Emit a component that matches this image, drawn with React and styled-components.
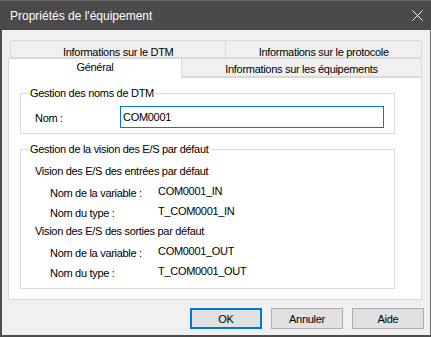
import React from 'react'
import styled, {createGlobalStyle} from 'styled-components'

const GlobalStyle = createGlobalStyle`
  html, body {
    margin: 0;
    padding: 0;
    background: #f0f0f0;
  }
  body {
    font-family: "Liberation Sans", Arial, sans-serif;
  }
`

const font = `
  font-family: "Liberation Sans", Arial, sans-serif;
  font-size: 11px;
  letter-spacing: -0.3px;
  color: #000;
`

const Window = styled.div`
  width: 431px;
  height: 337px;
  box-sizing: border-box;
  display: flex;
  flex-direction: column;
  background: #f0f0f0;
  border-left: 2px solid #4d4d4d;
  border-right: 1px solid #6d6d6d;
  border-bottom: 2px solid #4d4d4d;
`

const TitleBar = styled.div`
  height: 30px;
  flex: none;
  box-sizing: border-box;
  border-top: 1px solid #6a6a6a;
  background: #4a4a4a;
  display: flex;
  align-items: center;
  justify-content: space-between;
  padding: 0 8px 0 8px;
  margin-left: -2px;
  margin-right: -1px;
  padding-left: 10px;
  color: #fff;
  font-family: "Liberation Sans", Arial, sans-serif;
  font-size: 12px;
`

const CloseIcon = () =>
  <svg width="11" height="11" viewBox="0 0 11 11">
    <path d="M0.5 0.5 L10.5 10.5 M10.5 0.5 L0.5 10.5" stroke="#fff" strokeWidth="1" fill="none"/>
  </svg>

const Body = styled.div`
  flex: 1;
  display: flex;
  flex-direction: column;
  padding: 10px 8px 0 6px;
`

const TabRow = styled.div`
  display: flex;
  padding-left: ${({indent}) => indent}px;
`

const Tab = styled.div`
  ${font}
  width: ${({w}) => w}px;
  height: ${({h}) => h}px;
  box-sizing: border-box;
  display: flex;
  justify-content: center;
  align-items: flex-start;
  padding-top: ${({pt}) => pt}px;
  line-height: 13px;
  background: ${({active}) => active ? '#fff' : '#f0f0f0'};
  border: 1px solid #d9d9d9;
  border-bottom: ${({active}) => active ? 'none' : '1px solid #d9d9d9'};
  margin-left: ${({join}) => join ? '-1px' : '0'};
  position: relative;
  z-index: ${({active}) => active ? 2 : 1};
  margin-bottom: ${({active}) => active ? '-1px' : '0'};
  white-space: nowrap;
`

const Panel = styled.div`
  height: 223px;
  box-sizing: border-box;
  background: #fff;
  border: 1px solid #d9d9d9;
  padding: 9px 0 0 11px;
  display: flex;
  flex-direction: column;
  gap: 9px;
`

const Group = styled.fieldset`
  width: 375px;
  box-sizing: border-box;
  margin: 0;
  min-width: 0;
  border: 1px solid #dcdcdc;
  padding: 0 0 ${({pb}) => pb}px 8px;
`

const Legend = styled.legend`
  ${font}
  line-height: 13px;
  padding: 0 1px;
`

const NameRow = styled.div`
  display: flex;
  align-items: center;
  margin: 6px 0 0 6px;
`

const Label = styled.div`
  ${font}
  width: ${({w}) => w}px;
  flex: none;
  padding-top: 2px;
`

const TextBox = styled.input`
  ${font}
  width: 264px;
  height: 22px;
  box-sizing: border-box;
  border: 1px solid #0078d7;
  padding: 0 2px 1px 2px;
  outline: none;
  background: #fff;
`

const InfoList = styled.div`
  display: flex;
  flex-direction: column;
  padding: 5px 0 0 6px;
`

const Heading = styled.div`
  ${font}
  line-height: 20px;
  height: 20px;
`

const InfoRow = styled.div`
  display: flex;
  line-height: 20px;
  height: 20px;
  padding-left: 15px;
`

const Value = styled.div`
  ${font}
`

const ButtonBar = styled.div`
  display: flex;
  justify-content: flex-end;
  gap: 9px;
  margin: 8px -2px 0 0;
`

const Button = styled.button`
  ${font}
  width: 72px;
  height: 21px;
  box-sizing: border-box;
  background: #e1e1e1;
  border: 1px solid ${({primary}) => primary ? '#0078d7' : '#adadad'};
  box-shadow: ${({primary}) => primary ? 'inset 0 0 0 1px #0078d7' : 'none'};
  padding: 0;
  display: flex;
  align-items: center;
  justify-content: center;
`

const sections = [
  {
    title: 'Vision des E/S des entrées par défaut',
    rows: [['Nom de la variable :', 'COM0001_IN'], ['Nom du type :', 'T_COM0001_IN']]
  },
  {
    title: 'Vision des E/S des sorties par défaut',
    rows: [['Nom de la variable :', 'COM0001_OUT'], ['Nom du type :', 'T_COM0001_OUT']]
  }
]

const App = () =>
  <>
    <GlobalStyle/>
    <Window>
      <TitleBar>
        <span>Propriétés de l'équipement</span>
        <CloseIcon/>
      </TitleBar>
      <Body>
        <TabRow indent={2}>
          <Tab w={217} h={18} pt={5}>Informations sur le DTM</Tab>
          <Tab w={197} h={18} pt={5} join>Informations sur le protocole</Tab>
        </TabRow>
        <TabRow indent={0}>
          <Tab w={174} h={20} pt={2} active>Général</Tab>
          <Tab w={241} h={19} pt={4} join>Informations sur les équipements</Tab>
        </TabRow>
        <Panel>
          <Group pb={5}>
            <Legend>Gestion des noms de DTM</Legend>
            <NameRow>
              <Label w={85}>Nom :</Label>
              <TextBox defaultValue="COM0001"/>
            </NameRow>
          </Group>
          <Group pb={7}>
            <Legend>Gestion de la vision des E/S par défaut</Legend>
            <InfoList>
              {sections.map(s =>
                <React.Fragment key={s.title}>
                  <Heading>{s.title}</Heading>
                  {s.rows.map(([k, v]) =>
                    <InfoRow key={k}>
                      <Label w={108}>{k}</Label>
                      <Value>{v}</Value>
                    </InfoRow>
                  )}
                </React.Fragment>
              )}
            </InfoList>
          </Group>
        </Panel>
        <ButtonBar>
          <Button primary>OK</Button>
          <Button>Annuler</Button>
          <Button>Aide</Button>
        </ButtonBar>
      </Body>
    </Window>
  </>

export default App
